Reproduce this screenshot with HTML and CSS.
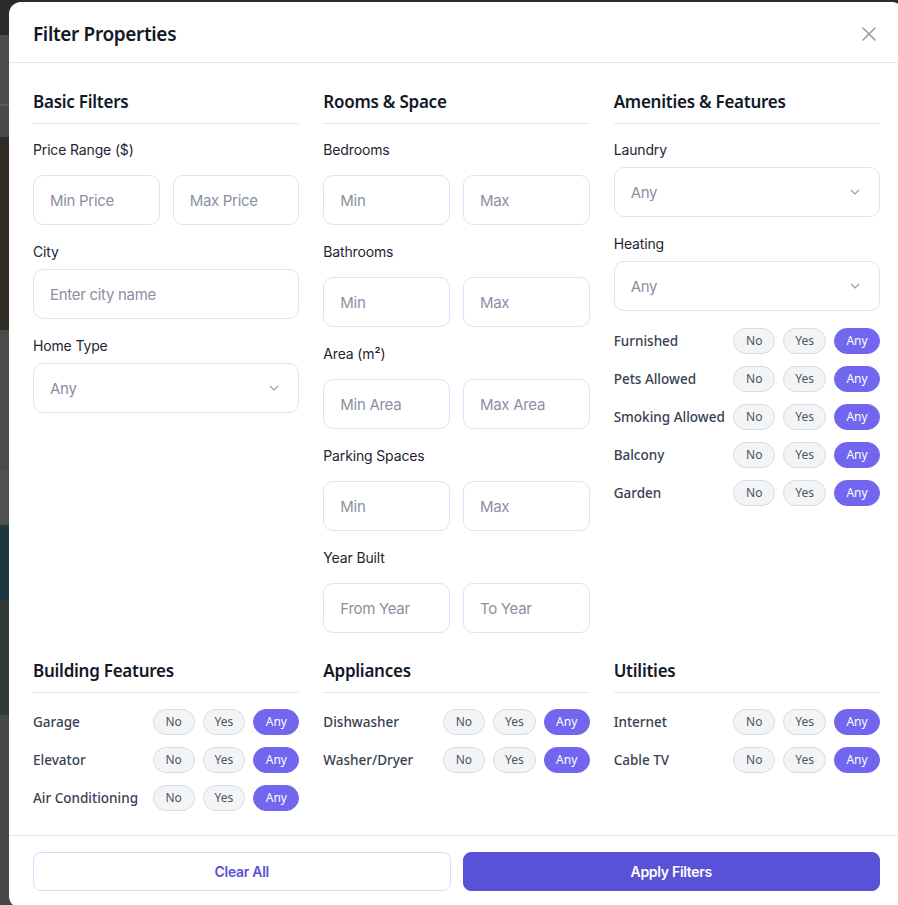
FILE: index.html
```html
<!DOCTYPE html>
<html lang="en">
<head>
<meta charset="utf-8">
<title>Filter Properties</title>
<link rel="stylesheet" href="styles.css">
</head>
<body>
<div class="page-behind"></div>
<div class="modal">
  <header class="modal-header">
    <h2 class="modal-title">Filter Properties</h2>
    <button class="close-btn" aria-label="Close">
      <svg width="16" height="16" viewBox="0 0 16 16" fill="none" stroke="#9a9ca8" stroke-width="1.6" stroke-linecap="round"><path d="M2 2 L14 14 M14 2 L2 14"/></svg>
    </button>
  </header>
  <div class="modal-body">
    <div class="sections">
      <section class="section">
        <h3 class="section-title">Basic Filters</h3>
        <div class="field pair">
          <label class="field-label">Price Range ($)</label>
          <div class="pair-inputs">
            <input class="input" placeholder="Min Price">
            <input class="input" placeholder="Max Price">
          </div>
        </div>
        <div class="field">
          <label class="field-label">City</label>
          <input class="input" placeholder="Enter city name">
        </div>
        <div class="field">
          <label class="field-label">Home Type</label>
          <div class="select"><span>Any</span><svg width="12" height="8" viewBox="0 0 12 8" fill="none" stroke="#9a9ca8" stroke-width="1.2"><path d="M2 2 L6 6 L10 2"/></svg></div>
        </div>
      </section>

      <section class="section">
        <h3 class="section-title">Rooms &amp; Space</h3>
        <div class="field pair">
          <label class="field-label">Bedrooms</label>
          <div class="pair-inputs">
            <input class="input" placeholder="Min">
            <input class="input" placeholder="Max">
          </div>
        </div>
        <div class="field pair">
          <label class="field-label">Bathrooms</label>
          <div class="pair-inputs">
            <input class="input" placeholder="Min">
            <input class="input" placeholder="Max">
          </div>
        </div>
        <div class="field pair">
          <label class="field-label">Area (m²)</label>
          <div class="pair-inputs">
            <input class="input" placeholder="Min Area">
            <input class="input" placeholder="Max Area">
          </div>
        </div>
        <div class="field pair">
          <label class="field-label">Parking Spaces</label>
          <div class="pair-inputs">
            <input class="input" placeholder="Min">
            <input class="input" placeholder="Max">
          </div>
        </div>
        <div class="field pair">
          <label class="field-label">Year Built</label>
          <div class="pair-inputs">
            <input class="input" placeholder="From Year">
            <input class="input" placeholder="To Year">
          </div>
        </div>
      </section>

      <section class="section">
        <h3 class="section-title">Amenities &amp; Features</h3>
        <div class="field compact">
          <label class="field-label">Laundry</label>
          <div class="select"><span>Any</span><svg width="12" height="8" viewBox="0 0 12 8" fill="none" stroke="#9a9ca8" stroke-width="1.2"><path d="M2 2 L6 6 L10 2"/></svg></div>
        </div>
        <div class="field compact">
          <label class="field-label">Heating</label>
          <div class="select"><span>Any</span><svg width="12" height="8" viewBox="0 0 12 8" fill="none" stroke="#9a9ca8" stroke-width="1.2"><path d="M2 2 L6 6 L10 2"/></svg></div>
        </div>
        <div class="toggles after-fields">
          <div class="toggle-row"><span class="toggle-label">Furnished</span><div class="pills"><span class="pill">No</span><span class="pill">Yes</span><span class="pill active">Any</span></div></div>
          <div class="toggle-row"><span class="toggle-label">Pets Allowed</span><div class="pills"><span class="pill">No</span><span class="pill">Yes</span><span class="pill active">Any</span></div></div>
          <div class="toggle-row"><span class="toggle-label">Smoking Allowed</span><div class="pills"><span class="pill">No</span><span class="pill">Yes</span><span class="pill active">Any</span></div></div>
          <div class="toggle-row"><span class="toggle-label">Balcony</span><div class="pills"><span class="pill">No</span><span class="pill">Yes</span><span class="pill active">Any</span></div></div>
          <div class="toggle-row"><span class="toggle-label">Garden</span><div class="pills"><span class="pill">No</span><span class="pill">Yes</span><span class="pill active">Any</span></div></div>
        </div>
      </section>

      <section class="section">
        <h3 class="section-title">Building Features</h3>
        <div class="toggles">
          <div class="toggle-row"><span class="toggle-label">Garage</span><div class="pills"><span class="pill">No</span><span class="pill">Yes</span><span class="pill active">Any</span></div></div>
          <div class="toggle-row"><span class="toggle-label">Elevator</span><div class="pills"><span class="pill">No</span><span class="pill">Yes</span><span class="pill active">Any</span></div></div>
          <div class="toggle-row"><span class="toggle-label">Air Conditioning</span><div class="pills"><span class="pill">No</span><span class="pill">Yes</span><span class="pill active">Any</span></div></div>
        </div>
      </section>

      <section class="section">
        <h3 class="section-title">Appliances</h3>
        <div class="toggles">
          <div class="toggle-row"><span class="toggle-label">Dishwasher</span><div class="pills"><span class="pill">No</span><span class="pill">Yes</span><span class="pill active">Any</span></div></div>
          <div class="toggle-row"><span class="toggle-label">Washer/Dryer</span><div class="pills"><span class="pill">No</span><span class="pill">Yes</span><span class="pill active">Any</span></div></div>
        </div>
      </section>

      <section class="section">
        <h3 class="section-title">Utilities</h3>
        <div class="toggles">
          <div class="toggle-row"><span class="toggle-label">Internet</span><div class="pills"><span class="pill">No</span><span class="pill">Yes</span><span class="pill active">Any</span></div></div>
          <div class="toggle-row"><span class="toggle-label">Cable TV</span><div class="pills"><span class="pill">No</span><span class="pill">Yes</span><span class="pill active">Any</span></div></div>
        </div>
      </section>
    </div>
  </div>
  <footer class="modal-footer">
    <button class="btn btn-outline">Clear All</button>
    <button class="btn btn-primary">Apply Filters</button>
  </footer>
</div>
</body>
</html>
```
FILE: styles.css
```css
* { box-sizing: border-box; }

html, body {
  margin: 0;
  padding: 0;
  width: 898px;
  height: 905px;
  overflow: hidden;
}

body {
  font-family: "Noto Sans", "Liberation Sans", sans-serif;
  background: linear-gradient(to bottom,
    #2b2b2b 0 35px,
    #4d4d4d 35px 104px,
    #5c5c5c 104px 106px,
    #4a4a4a 106px 137px,
    #302b25 137px 330px,
    #4b4b4b 330px 470px,
    #505050 470px 525px,
    #1d3640 525px 600px,
    #2f3b33 600px 715px,
    #484848 715px 905px);
}

.page-behind { height: 0; }

.modal {
  position: absolute;
  left: 9px;
  top: 2px;
  width: 895px;
  height: 906px;
  background: #ffffff;
  border-radius: 12px;
  display: flex;
  flex-direction: column;
  overflow: hidden;
}

.modal-header {
  height: 61px;
  flex: none;
  display: flex;
  align-items: center;
  justify-content: space-between;
  padding: 3px 23px 0 24px;
  border-bottom: 1px solid #e5e7eb;
}

.modal-title {
  margin: 0;
  font-size: 19px;
  font-weight: 600;
  color: #111827;
  letter-spacing: -0.35px;
}

.close-btn {
  width: 24px;
  height: 24px;
  border: 0;
  background: none;
  padding: 0;
  display: flex;
  align-items: center;
  justify-content: center;
}

.modal-body {
  padding: 24px 24px 24px;
  flex: none;
}

.sections {
  display: grid;
  grid-template-columns: repeat(3, 1fr);
  column-gap: 24px;
  row-gap: 23px;
}

.section-title {
  margin: 0 0 16px;
  font-size: 17px;
  font-weight: 600;
  line-height: 30px;
  padding-bottom: 6px;
  border-bottom: 1px solid #e5e7eb;
  color: #111827;
  letter-spacing: -0.25px;
}

.field { margin-bottom: 17px; }
.field:last-child { margin-bottom: 0; }
.field.compact { margin-bottom: 17px; }

.field-label {
  display: block;
  font-family: "Inter", "Liberation Sans", sans-serif;
  font-size: 14px;
  line-height: 20px;
  color: #1f2433;
  letter-spacing: -0.15px;
  margin-bottom: 7px;
}

.field.pair .field-label { margin-bottom: 15px; }

.pair-inputs {
  display: grid;
  grid-template-columns: 1fr 1fr;
  gap: 13px;
}

.input, .select {
  display: block;
  width: 100%;
  height: 50px;
  border: 1px solid #e3e0fa;
  border-radius: 10px;
  padding: 0 16px;
  font-family: "Inter", "Liberation Sans", sans-serif;
  font-size: 15px;
  letter-spacing: -0.3px;
  color: #1f2433;
  background: #ffffff;
  outline: none;
}

.input::placeholder { color: #8b8fa3; }

.select {
  display: flex;
  align-items: center;
  justify-content: space-between;
  color: #8b8fa3;
  padding-right: 18px;
}

.toggles {
  display: flex;
  flex-direction: column;
  gap: 12px;
}

.toggles.after-fields { margin-top: 0; }

.toggle-row {
  display: flex;
  align-items: center;
  justify-content: space-between;
  height: 26px;
}

.toggle-label {
  font-size: 13.5px;
  font-weight: 500;
  color: #374151;
}

.pills {
  display: flex;
  gap: 8px;
}

.pill {
  height: 26px;
  border-radius: 13px;
  border: 1px solid #d9dbe0;
  background: #f3f4f6;
  color: #4b5563;
  font-size: 12px;
  line-height: 24px;
  padding: 0 11px;
  min-width: 42px;
  text-align: center;
}

.pill.active {
  background: #7266ee;
  border-color: #7266ee;
  color: #ffffff;
  min-width: 46px;
}

.modal-footer {
  flex: none;
  border-top: 1px solid #e5e7eb;
  padding: 16px 24px;
  display: grid;
  grid-template-columns: 1fr 1fr;
  gap: 12px;
}

.btn {
  height: 39px;
  border-radius: 8px;
  font-family: "Inter", "Liberation Sans", sans-serif;
  font-size: 14px;
  font-weight: 600;
  letter-spacing: -0.3px;
}

.btn-outline {
  background: #ffffff;
  border: 1px solid #ddd9fb;
  color: #5a52d6;
}

.btn-primary {
  background: #5a52d6;
  border: 1px solid #5a52d6;
  color: #ffffff;
}
```
